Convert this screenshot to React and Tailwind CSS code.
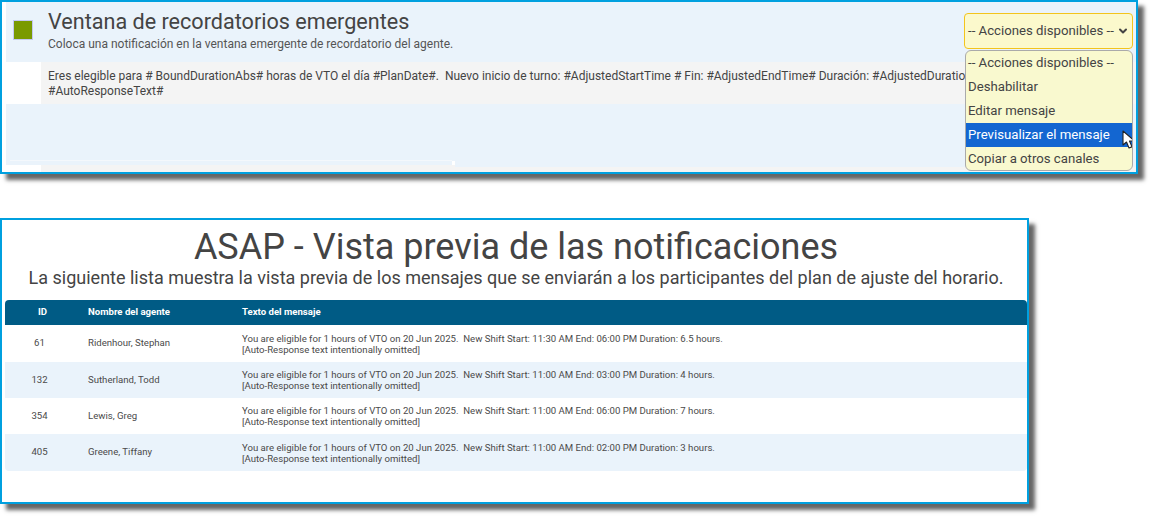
import { ChevronDown } from 'lucide-react';

const options = ['-- Acciones disponibles --', 'Deshabilitar', 'Editar mensaje', 'Previsualizar el mensaje', 'Copiar a otros canales'];

const rows = [
    { id: 61, name: 'Ridenhour, Stephan', start: '11:30 AM', end: '06:00 PM', duration: '6.5', h: 'h-[37px]' },
    { id: 132, name: 'Sutherland, Todd', start: '11:00 AM', end: '03:00 PM', duration: '4', h: 'h-[36px]' },
    { id: 354, name: 'Lewis, Greg', start: '11:00 AM', end: '06:00 PM', duration: '7', h: 'h-[36px]' },
    { id: 405, name: 'Greene, Tiffany', start: '11:00 AM', end: '02:00 PM', duration: '3', h: 'h-[37px]' },
];

function Cursor() {
    return (
        <svg className="absolute left-[156px] top-[79px]" width="14" height="20" viewBox="0 0 14 20">
            <path d="M1 1 L1 15 L4.5 12 L7 18 L10 16.8 L7.5 11 L12.5 11 Z" fill="#fff" stroke="#222" strokeWidth="1.1" strokeLinejoin="round" />
        </svg>
    );
}

function ActionsSelect() {
    return (
        <div className="relative w-[169px] text-[13.2px] text-[#444]">
            <div className="h-9 flex items-center justify-between pl-[3px] pr-[3px] bg-[#fbf9cc] border border-[#f3c41c] rounded">
                <span className="whitespace-nowrap">-- Acciones disponibles --</span>
                <ChevronDown size={12} strokeWidth={4} className="text-[#444]" />
            </div>
            <div className="absolute left-[1px] top-[37px] w-[168px] h-[121px] bg-[#f9f9cf] border border-[#aaa] rounded-md overflow-hidden">
                {options.map((o) => (
                    <div
                        key={o}
                        className={`h-6 flex items-center px-[2px] ${o === 'Previsualizar el mensaje' ? 'bg-[#1366d1] text-white' : ''}`}
                    >
                        {o}
                    </div>
                ))}
                <Cursor />
            </div>
        </div>
    );
}

function ReminderPanel() {
    return (
        <div className="w-[1138px] h-[174px] border-2 border-[#00a0df] bg-white shadow-[6px_6px_4px_#666] pl-1 overflow-hidden">
            <div className="h-[60px] bg-[#eaf3fb] flex justify-between pl-[7px] pr-[3px]">
                <div className="flex">
                    <div className="mt-[18px] w-5 h-5 bg-[#7a9a00] border border-[#c4c8f0]" />
                    <div className="ml-[15px] pt-[6px]">
                        <h2 className="text-[21.6px] leading-7 text-[#444]">Ventana de recordatorios emergentes</h2>
                        <p className="text-xs leading-[17px] text-[#555]">Coloca una notificación en la ventana emergente de recordatorio del agente.</p>
                    </div>
                </div>
                <div className="pt-[11px] relative z-10">
                    <ActionsSelect />
                </div>
            </div>
            <div className="ml-[35px] h-[42px] bg-[#f4f4f4] pl-[7px] pt-[7px] text-xs leading-[14.5px] text-[#444] whitespace-pre overflow-hidden">
                {'Eres elegible para # BoundDurationAbs# horas de VTO el día #PlanDate#.  Nuevo inicio de turno: #AdjustedStartTime # Fin: #AdjustedEndTime# Duración: #AdjustedDuration# horas.\n#AutoResponseText#'}
            </div>
            <div className="h-[61px] bg-[#eaf3fb] relative">
                <div className="absolute left-[4px] top-[56px] w-[442px] h-px bg-[#f4f8fc]" />
                <div className="absolute left-[446px] top-[57px] w-[3px] h-[4px] bg-white" />
            </div>
            <div className="ml-[35px] h-[7px] flex bg-[#f4f4f4]">
                <div className="ml-[414px] flex-1 h-[2px] bg-[#eaf3fb]" />
            </div>
        </div>
    );
}

function PreviewPanel() {
    return (
        <div className="mt-[44px] w-[1029px] h-[286px] border-2 border-[#00a0df] bg-white shadow-[6px_6px_4px_#666] pl-[3px]">
            <h1 className="text-center text-4xl leading-[45px] pt-[5px] h-[48px] text-[#444]">ASAP - Vista previa de las notificaciones</h1>
            <p className="text-center text-lg leading-[20px] text-[#444]">La siguiente lista muestra la vista previa de los mensajes que se enviarán a los participantes del plan de ajuste del horario.</p>
            <table className="mt-[12px] w-[1022px] table-fixed text-[9.6px] text-[#4a4a4a]">
                <thead>
                    <tr className="h-[25px] bg-[#005b85] text-white font-bold text-left">
                        <th className="w-[83px] text-center pr-[8px] rounded-tl">ID</th>
                        <th className="w-[154px]">Nombre del agente</th>
                        <th className="rounded-tr">Texto del mensaje</th>
                    </tr>
                </thead>
                <tbody>
                    {rows.map((r, i) => (
                        <tr key={r.id} className={`${r.h} ${i % 2 ? 'bg-[#eaf3fb]' : 'bg-white'}`}>
                            <td className={`text-center pr-[14px] ${i === 3 ? 'rounded-bl' : ''}`}>{r.id}</td>
                            <td>{r.name}</td>
                            <td className={`leading-[11px] whitespace-pre ${i === 3 ? 'rounded-br' : ''}`}>
                                {`You are eligible for 1 hours of VTO on 20 Jun 2025.  New Shift Start: ${r.start} End: ${r.end} Duration: ${r.duration} hours.\n[Auto-Response text intentionally omitted]`}
                            </td>
                        </tr>
                    ))}
                </tbody>
            </table>
        </div>
    );
}

export default function App() {
    return (
        <div className="w-[1153px] h-[519px] bg-white overflow-hidden font-['Roboto',sans-serif]">
            <ReminderPanel />
            <PreviewPanel />
        </div>
    );
}
